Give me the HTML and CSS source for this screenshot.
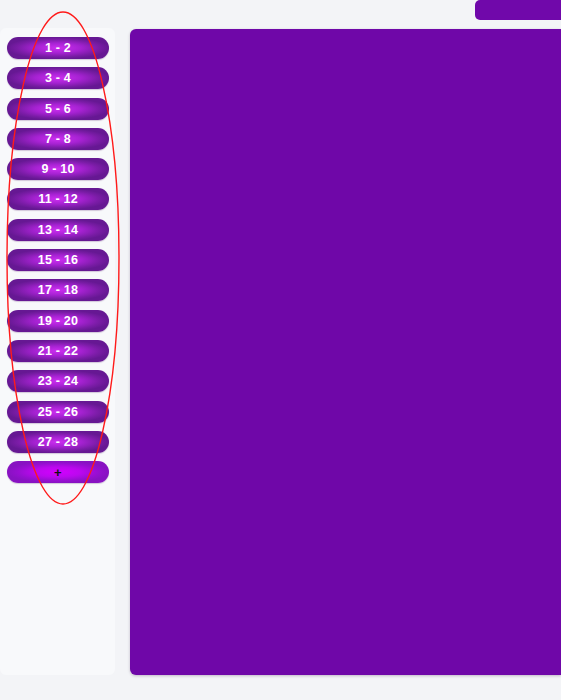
FILE: index.html
```html
<!DOCTYPE html>
<html>
<head>
<meta charset="utf-8">
<link rel="stylesheet" href="styles.css">
</head>
<body>
<div class="page">
  <div class="topbar"><div class="top-btn"></div></div>
  <div class="content">
    <div class="sidebar">
      <button class="range">1 - 2</button>
      <button class="range">3 - 4</button>
      <button class="range">5 - 6</button>
      <button class="range">7 - 8</button>
      <button class="range">9 - 10</button>
      <button class="range">11 - 12</button>
      <button class="range">13 - 14</button>
      <button class="range">15 - 16</button>
      <button class="range">17 - 18</button>
      <button class="range">19 - 20</button>
      <button class="range">21 - 22</button>
      <button class="range">23 - 24</button>
      <button class="range">25 - 26</button>
      <button class="range">27 - 28</button>
      <button class="range add">+</button>
    </div>
    <div class="main"></div>
  </div>
</div>
<svg class="annot" width="140" height="520" viewBox="0 0 140 520"><ellipse cx="63" cy="258" rx="56" ry="246" fill="none" stroke="#ff1a1a" stroke-width="1.4"/></svg>
</body>
</html>
```
FILE: styles.css
```css
html, body { margin: 0; padding: 0; }
body {
  background: #f3f4f7;
  width: 561px;
  height: 700px;
  overflow: hidden;
  position: relative;
  font-family: "Liberation Sans", Arial, sans-serif;
}
.page { display: flex; flex-direction: column; height: 700px; }
.topbar { height: 29px; display: flex; justify-content: flex-end; }
.top-btn {
  width: 86px;
  height: 20px;
  background: #7008aa;
  border-radius: 5px 0 0 5px;
}
.content { display: flex; gap: 15px; height: 646px; }
.sidebar {
  width: 115px;
  box-sizing: border-box;
  background: #f8f9fb;
  border-radius: 6px;
  padding: 9px 6px 0 7px;
  display: flex;
  flex-direction: column;
  gap: 8.3px;
  margin-top: -1px;
}
.range {
  width: 102px;
  height: 22px;
  flex-shrink: 0;
  border: none;
  border-radius: 11px;
  background: radial-gradient(ellipse closest-side at 50% 50%, #cc2ef0 0%, #a622d2 45%, #7a1ca6 80%, #661893 100%);
  color: #fff;
  font-family: "Liberation Sans", Arial, sans-serif;
  font-weight: bold;
  font-size: 12.5px;
  letter-spacing: 0.2px;
  padding: 0;
  box-shadow: 0 1px 1px rgba(60, 0, 90, 0.2);
}
.range.add {
  background: radial-gradient(ellipse closest-side at 50% 50%, #d400ff 0%, #bb08ee 45%, #960fd0 80%, #8812c2 100%);
  color: #111;
  font-size: 13px;
}
.main {
  flex: 1;
  background: #6f07a8;
  border-radius: 6px 0 0 6px;
  box-shadow: 0 1px 3px rgba(40, 0, 60, 0.25);
}
.annot { position: absolute; left: 0; top: 0; pointer-events: none; }
```
